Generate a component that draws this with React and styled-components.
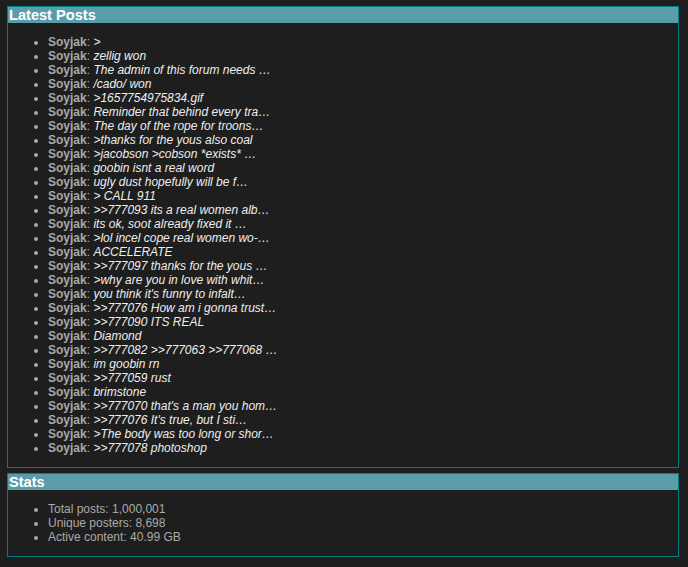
import React from "react";
import styled, { createGlobalStyle } from "styled-components";

const posts = [
  ">",
  "zellig won",
  "The admin of this forum needs …",
  "/cado/ won",
  ">1657754975834.gif",
  "Reminder that behind every tra…",
  "The day of the rope for troons…",
  ">thanks for the yous also coal",
  ">jacobson >cobson *exists* …",
  "goobin isnt a real word",
  "ugly dust hopefully will be f…",
  "> CALL 911",
  ">>777093 its a real women alb…",
  "its ok, soot already fixed it …",
  ">lol incel cope real women wo-…",
  "ACCELERATE",
  ">>777097 thanks for the yous …",
  ">why are you in love with whit…",
  "you think it's funny to infalt…",
  ">>777076 How am i gonna trust…",
  ">>777090 ITS REAL",
  "Diamond",
  ">>777082 >>777063 >>777068 …",
  "im goobin rn",
  ">>777059 rust",
  "brimstone",
  ">>777070 that's a man you hom…",
  ">>777076 It's true, but I sti…",
  ">The body was too long or shor…",
  ">>777078 photoshop",
];

const stats = [
  "Total posts: 1,000,001",
  "Unique posters: 8,698",
  "Active content: 40.99 GB",
];

const Global = createGlobalStyle`
  html, body {
    margin: 0;
    background: #1e1e1e;
  }
  body {
    padding: 6px 9px 0 7px;
    font-family: "Liberation Sans", Arial, sans-serif;
    font-size: 12px;
    color: #aaaaaa;
  }
`;

const Box = styled.section`
  border: 1px solid #008080;
  margin-bottom: 5px;
`;

const Title = styled.h2`
  margin: 0;
  padding: 0 1px;
  height: 16px;
  line-height: 16px;
  background: #5a9caa;
  color: #ffffff;
  font-size: 14.6px;
  font-weight: bold;
`;

const List = styled.ul`
  margin: 12px 0;
  padding-left: 40px;
  line-height: 14px;
  li::marker {
    color: #aaaaaa;
  }
`;

const Name = styled.b`
  color: #aaaaaa;
`;

const Text = styled.i`
  color: #eeeeee;
`;

export default function App() {
  return (
    <>
      <Global />
      <Box>
        <Title>Latest Posts</Title>
        <List>
          {posts.map((p, i) => (
            <li key={i}>
              <Name>Soyjak</Name>: <Text>{p}</Text>
            </li>
          ))}
        </List>
      </Box>
      <Box>
        <Title>Stats</Title>
        <List>
          {stats.map((s) => (
            <li key={s}>{s}</li>
          ))}
        </List>
      </Box>
    </>
  );
}
